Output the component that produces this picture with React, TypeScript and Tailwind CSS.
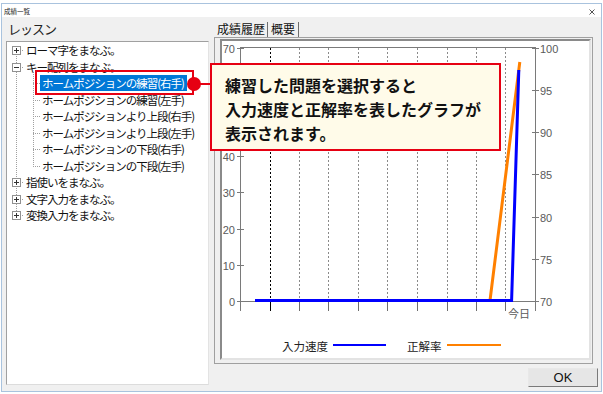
import React from "react";

type Row = { t: string; lvl: number; exp?: "+" | "-"; sel?: boolean };

const rows: Row[] = [
  { t: "ローマ字をまなぶ。", lvl: 0, exp: "+" },
  { t: "キー配列をまなぶ。", lvl: 0, exp: "-" },
  { t: "ホームポジションの練習(右手)", lvl: 1, sel: true },
  { t: "ホームポジションの練習(左手)", lvl: 1 },
  { t: "ホームポジションより上段(右手)", lvl: 1 },
  { t: "ホームポジションより上段(左手)", lvl: 1 },
  { t: "ホームポジションの下段(右手)", lvl: 1 },
  { t: "ホームポジションの下段(左手)", lvl: 1 },
  { t: "指使いをまなぶ。", lvl: 0, exp: "+" },
  { t: "文字入力をまなぶ。", lvl: 0, exp: "+" },
  { t: "変換入力をまなぶ。", lvl: 0, exp: "+" },
];

const cy = rows.map((_, i) => Math.round(50.25 + 16.5 * i));

function TreeLines() {
  const rootIdx = rows.map((r, i) => (r.lvl === 0 ? i : -1)).filter((i) => i >= 0);
  const childIdx = rows.map((r, i) => (r.lvl === 1 ? i : -1)).filter((i) => i >= 0);
  const lastRoot = cy[rootIdx[rootIdx.length - 1]];
  const lastChild = cy[childIdx[childIdx.length - 1]];
  return (
    <svg
      className="absolute left-0 top-0 pointer-events-none"
      width={201}
      height={341}
      viewBox="7 42 201 341"
    >
      <g stroke="#a0a0a0" strokeWidth={1} strokeDasharray="1 1" fill="none">
        <line x1={16.5} y1={cy[0]} x2={16.5} y2={lastRoot} />
        <line x1={33.5} y1={72} x2={33.5} y2={lastChild + 0.5} />
        {rootIdx.map((i) => (
          <line key={"h" + i} x1={20} y1={cy[i] + 0.5} x2={24} y2={cy[i] + 0.5} />
        ))}
        {childIdx.map((i) => (
          <line key={"c" + i} x1={33} y1={cy[i] + 0.5} x2={40} y2={cy[i] + 0.5} />
        ))}
      </g>
      {rootIdx.map((i) => {
        const c = cy[i];
        return (
          <g key={"b" + i}>
            <rect x={12.5} y={c - 3.5} width={8} height={8} fill="#fff" stroke="#919191" />
            <line x1={14} y1={c + 0.5} x2={19} y2={c + 0.5} stroke="#333" />
            {rows[i].exp === "+" && (
              <line x1={16.5} y1={c - 2} x2={16.5} y2={c + 3} stroke="#333" />
            )}
          </g>
        );
      })}
    </svg>
  );
}

function Chart() {
  const gx = [270, 299, 328, 358, 387, 417, 447, 476, 505];
  const ly = (v: number) => Math.round(301 - v * 3.621) + 0.5;
  const ry = (v: number) => Math.round(301 - (v - 70) * 8.45) + 0.5;
  const lv = [0, 10, 20, 30, 40, 50, 60, 70];
  const lvShown = [0, 10, 20, 30, 40, 70];
  const rv = [70, 75, 80, 85, 90, 95, 100];
  return (
    <svg width={367} height={317} viewBox="222 41 367 317" className="block">
      {gx.map((x, i) => (
        <line
          key={"g" + x}
          x1={x + 0.5}
          y1={48}
          x2={x + 0.5}
          y2={301}
          stroke={i === 0 ? "#000" : "#8a8a8a"}
          strokeDasharray="2 2"
        />
      ))}
      {[...gx, 535].map((x, i) => (
        <line
          key={"t" + x}
          x1={x + 0.5}
          y1={301}
          x2={x + 0.5}
          y2={311}
          stroke={i === 0 ? "#000" : "#6e6e6e"}
        />
      ))}
      <g stroke="#7a7a7a" strokeWidth={1}>
        <line x1={240} y1={47.5} x2={536} y2={47.5} />
        <line x1={240} y1={301.5} x2={536} y2={301.5} />
        <line x1={240.5} y1={47} x2={240.5} y2={311} />
        <line x1={535.5} y1={47} x2={535.5} y2={311} />
        {lv.map((v) => (
          <line key={"lt" + v} x1={237} y1={ly(v)} x2={244} y2={ly(v)} />
        ))}
        {rv.map((v) => (
          <line key={"rt" + v} x1={532} y1={ry(v)} x2={539} y2={ry(v)} />
        ))}
      </g>
      <g
        fill="#5a5a5a"
        fontFamily="'Liberation Sans', Arial, sans-serif"
        fontSize={11}
        dominantBaseline="central"
      >
        {lvShown.map((v) => (
          <text key={"ll" + v} x={235} y={ly(v)} textAnchor="end">
            {v}
          </text>
        ))}
        {rv.map((v) => (
          <text key={"rl" + v} x={540} y={ry(v)}>
            {v}
          </text>
        ))}
      </g>
      <text
        x={519}
        y={312.5}
        fill="#5a5a5a"
        fontSize={11}
        textAnchor="middle"
        dominantBaseline="central"
        fontFamily="'Noto Sans CJK JP', sans-serif"
      >
        今日
      </text>
      <polyline
        points="255,300.5 490,300.5 519.8,62"
        fill="none"
        stroke="#ff8000"
        strokeWidth={3}
      />
      <polyline
        points="255,300.5 511.6,300.5 518.8,70"
        fill="none"
        stroke="#0000ff"
        strokeWidth={3}
      />
      <g fontFamily="'Noto Sans CJK JP', sans-serif" fontSize={11.5} fill="#222" dominantBaseline="central">
        <text x={282} y={346}>入力速度</text>
        <text x={407} y={346}>正解率</text>
      </g>
      <line x1={333} y1={345} x2={386} y2={345} stroke="#0000ff" strokeWidth={2} />
      <line x1={447} y1={345} x2={501} y2={345} stroke="#ff8000" strokeWidth={2} />
    </svg>
  );
}

export default function App() {
  return (
    <div className="relative w-[603px] h-[394px] bg-white overflow-hidden font-['Noto_Sans_CJK_JP','Noto_Sans',sans-serif] text-black">
      <div className="ml-[1px] mt-[3px] w-[601px] h-[389px] border border-[#a9c3de] flex flex-col">
        {/* title bar */}
        <div className="h-[13px] bg-white flex items-center justify-between pl-[2px] pr-[6px]">
          <span className="text-[6.5px] leading-none text-[#222] mt-[1px]">成績一覧</span>
          <svg width={6} height={6} viewBox="0 0 6 6" className="mt-[2px]">
            <path d="M0.5 0.5 L5.5 5.5 M5.5 0.5 L0.5 5.5" stroke="#555" strokeWidth={1} />
          </svg>
        </div>
        {/* body */}
        <div className="flex-1 bg-[#f0f0f0] flex pl-[4px] pr-[2px]">
          {/* left column */}
          <div className="w-[203px] flex flex-col pb-[6px]">
            <div className="h-[24px] flex items-center pl-[2px] text-[13px] tracking-[-1px] text-[#222]">
              レッスン
            </div>
            <div className="relative flex-1 bg-white border border-t-[#a0a0a0] border-l-[#a0a0a0] border-r-[#e3e3e3] border-b-[#dcdcdc]">
              <TreeLines />
              <div className="relative">
                {rows.map((r, i) => (
                  <div
                    key={i}
                    className={`h-[16.5px] flex items-center text-[11.5px] tracking-[-1px] whitespace-nowrap ${
                      r.lvl === 0 ? "pl-[17px]" : "pl-[33px]"
                    }`}
                  >
                    <span
                      className={`h-[16px] leading-[16px] pl-[2px] pr-[3px] ${
                        r.sel ? "bg-[#0078d7] text-white" : "text-[#111]"
                      }`}
                    >
                      {r.t}
                    </span>
                  </div>
                ))}
              </div>
            </div>
          </div>
          {/* right column */}
          <div className="ml-[5px] w-[384px] flex flex-col pb-[3px]">
            <div className="h-[20px] flex items-end pl-[3px]">
              <div className="flex items-center h-[16px] text-[12px] text-[#111]">
                <span className="pr-[2px]">成績履歴</span>
                <span className="w-px h-[15px] bg-[#6e6e6e]" />
                <span className="px-[3px]">概要</span>
                <span className="w-px h-[15px] bg-[#6e6e6e]" />
              </div>
            </div>
            <div className="w-[379px] h-[327px] border border-[#a0a0a0] pt-[1px] pl-[5px]">
              <div className="w-[371px] h-[321px] bg-white border-l-2 border-t-2 border-r-2 border-b-2 border-l-[#8a8a8a] border-t-[#8a8a8a] border-r-[#e3e3e3] border-b-[#e3e3e3]">
                <Chart />
              </div>
            </div>
            <div className="flex justify-end mt-[4px]">
              <button className="w-[70px] h-[19px] bg-[#e6e6e6] border border-t-[#e8e8e8] border-l-[#e8e8e8] border-r-[#7a7a7a] border-b-[#7a7a7a] text-[13px] leading-none font-['Liberation_Sans',sans-serif] text-[#111] flex items-center justify-center">
                OK
              </button>
            </div>
          </div>
        </div>
      </div>

      {/* annotation overlay */}
      <div className="absolute left-[35px] top-[70px] w-[159px] h-[25px] border-2 border-[#e60012]" />
      <div className="absolute left-[199px] top-[83px] w-[12px] h-[2px] bg-[#e60012]" />
      <div className="absolute left-[187px] top-[77px] w-[14px] h-[14px] rounded-full bg-[#e60012]" />
      <div className="absolute left-[210px] top-[63px] w-[291px] h-[88px] border-2 border-[#e60012] bg-[#fffbe9] pl-[13px] pt-[8px] text-[16px] leading-[24px] font-bold text-[#111] whitespace-nowrap">
        練習した問題を選択すると
        <br />
        入力速度と正解率を表したグラフが
        <br />
        表示されます。
      </div>
    </div>
  );
}
